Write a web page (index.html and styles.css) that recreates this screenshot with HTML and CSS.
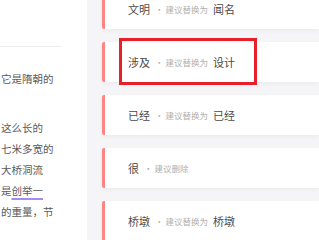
FILE: index.html
```html
<!DOCTYPE html>
<html lang="zh-CN">
<head>
  <meta charset="UTF-8">
  <meta name="viewport" content="width=device-width, initial-scale=1.0">
  <title>校对建议</title>
  <link rel="stylesheet" href="styles.css">
</head>
<body>
  <div class="page">
    <!-- 左侧正文 -->
    <div class="article">
      <div class="divider"></div>
      <div class="para">
        <div class="line">它是隋朝的</div>
        <div class="line"></div>
      </div>
      <div class="para">
        <div class="line">这么长的</div>
        <div class="line">七米多宽的</div>
        <div class="line">大桥洞流</div>
        <div class="line">是<span class="mark">创举一</span></div>
        <div class="line">的重量，节</div>
      </div>
    </div>

    <!-- 右侧建议列表 -->
    <div class="suggest">
      <div class="list">
        <div class="card">
          <span class="word">文明</span>
          <span class="hint">· 建议替换为</span>
          <span class="word">闻名</span>
        </div>
        <div class="card">
          <span class="word">涉及</span>
          <span class="hint">· 建议替换为</span>
          <span class="word">设计</span>
        </div>
        <div class="card">
          <span class="word">已经</span>
          <span class="hint">· 建议替换为</span>
          <span class="word">已经</span>
        </div>
        <div class="card">
          <span class="word">很</span>
          <span class="hint">· 建议删除</span>
        </div>
        <div class="card">
          <span class="word">桥墩</span>
          <span class="hint">· 建议替换为</span>
          <span class="word">桥墩</span>
        </div>
      </div>
      <!-- 选中框 -->
      <div class="focus"></div>
    </div>
  </div>
</body>
</html>
```

FILE: styles.css
```css
html,
body {
  margin: 0;
  padding: 0;
}

body {
  width: 319px;
  height: 240px;
  overflow: hidden;
  font-family: "Noto Sans CJK SC", "Noto Sans", sans-serif;
  background-color: #fff;
}

.page {
  display: flex;
  height: 240px;
}

/* 左侧正文 */
.article {
  width: 87px;
  flex-shrink: 0;
  background-color: #fff;
  font-size: 10.5px;
  line-height: 21px;
  color: #5a5a5a;
  overflow: hidden;
  white-space: nowrap;
}

.divider {
  width: 62px;
  height: 1px;
  margin-top: 46px;
  margin-bottom: 21px;
  background-color: #eeeef0;
}

.para + .para {
  margin-top: 7px;
}

.line {
  height: 21px;
  padding-left: 1px;
}

.mark {
  text-decoration: underline;
  text-decoration-color: #a58af2;
  text-decoration-thickness: 2px;
  text-underline-offset: 3px;
}

/* 右侧建议列表 */
.suggest {
  position: relative;
  flex: 1;
  background-color: #f5f5f7;
  padding-left: 15px;
}

.list {
  display: flex;
  flex-direction: column;
  gap: 13px;
  margin-top: -11px;
}

.card {
  display: flex;
  align-items: center;
  gap: 5px;
  height: 40px;
  padding-left: 23px;
  background-color: #fff;
  border-left: 3px solid #ff8585;
  border-radius: 2px 0 0 2px;
  box-shadow: 0 2px 4px rgba(0, 0, 0, 0.04);
  white-space: nowrap;
}

.word {
  font-size: 11px;
  color: #4a4a4a;
}

.hint {
  font-size: 8.5px;
  color: #b0b0b0;
}

/* 选中框：红色边框 */
.focus {
  position: absolute;
  left: 32px;
  top: 38px;
  width: 132px;
  height: 41px;
  border: 3px solid #e8202a;
}
```
